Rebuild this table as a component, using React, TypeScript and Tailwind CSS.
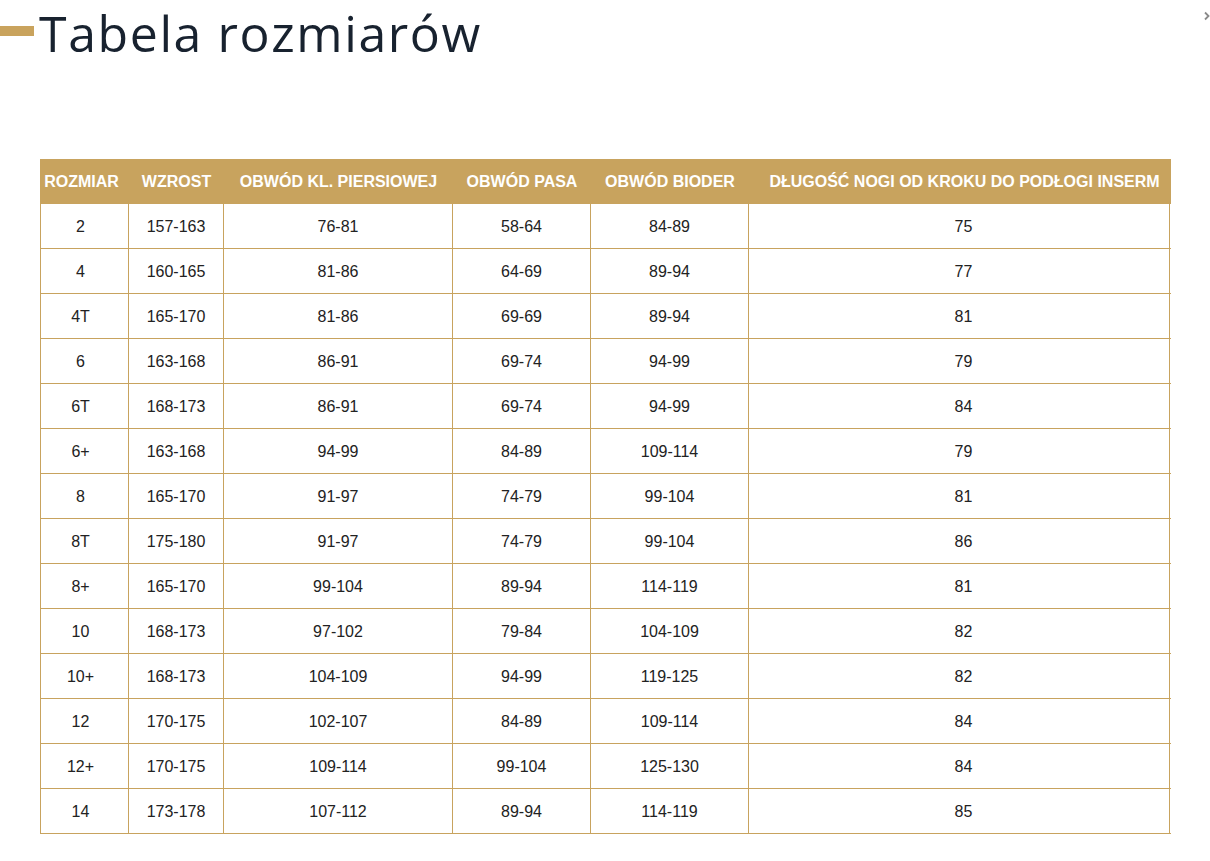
const rows: string[][] = [
  ["2", "157-163", "76-81", "58-64", "84-89", "75"],
  ["4", "160-165", "81-86", "64-69", "89-94", "77"],
  ["4T", "165-170", "81-86", "69-69", "89-94", "81"],
  ["6", "163-168", "86-91", "69-74", "94-99", "79"],
  ["6T", "168-173", "86-91", "69-74", "94-99", "84"],
  ["6+", "163-168", "94-99", "84-89", "109-114", "79"],
  ["8", "165-170", "91-97", "74-79", "99-104", "81"],
  ["8T", "175-180", "91-97", "74-79", "99-104", "86"],
  ["8+", "165-170", "99-104", "89-94", "114-119", "81"],
  ["10", "168-173", "97-102", "79-84", "104-109", "82"],
  ["10+", "168-173", "104-109", "94-99", "119-125", "82"],
  ["12", "170-175", "102-107", "84-89", "109-114", "84"],
  ["12+", "170-175", "109-114", "99-104", "125-130", "84"],
  ["14", "173-178", "107-112", "89-94", "114-119", "85"],
];

const headers = [
  "ROZMIAR",
  "WZROST",
  "OBWÓD KL. PIERSIOWEJ",
  "OBWÓD PASA",
  "OBWÓD BIODER",
  "DŁUGOŚĆ NOGI OD KROKU DO PODŁOGI INSERM",
];

// column widths incl. right border
const cols = ["w-[89px]", "w-[95px]", "w-[229px]", "w-[138px]", "w-[158px]", "w-[421px]"];

export default function App() {
  return (
    <div className="relative w-[1210px] h-[861px] bg-white overflow-hidden" style={{ fontFamily: "'Liberation Sans', Arial, sans-serif" }}>
      {/* title */}
      <div className="flex items-center h-[66px]">
        <div className="w-[34px] h-[10px] bg-[#c9a35d] mt-[-4px]" />
        <h1
          className="ml-[5px] text-[50px] leading-[1.2] text-[#18222f] tracking-[1.6px]"
          style={{ fontFamily: "'Open Sans', sans-serif", fontWeight: 400 }}
        >
          Tabela rozmiarów
        </h1>
      </div>
      <svg className="absolute left-[1203px] top-[11px]" width="8" height="10" viewBox="0 0 8 10" fill="none">
        <path d="M2 1.5 L5.5 5 L2 8.5" stroke="#8a8a8a" strokeWidth="1.8" />
      </svg>

      {/* table */}
      <div className="ml-[40px] mt-[93px] w-[1131px]">
        <div className="flex h-[45px] bg-[#c8a35e] text-white text-[16px] font-bold items-center">
          {headers.map((h, i) => (
            <div
              key={h}
              className={`${cols[i]} shrink-0 whitespace-nowrap overflow-hidden flex justify-center ${i === 0 ? "pr-[8px] pl-[2px]" : ""} ${i === 5 ? "pl-[10px]" : ""}`}
            >
              {h}
            </div>
          ))}
        </div>
        <div className="border-l border-[#c8a35e]">
          {rows.map((r, ri) => (
            <div key={ri} className="flex h-[45px] border-b border-[#c8a35e] text-[16px] text-[#222]">
              {r.map((c, ci) => (
                <div
                  key={ci}
                  className={`${ci === 0 ? "w-[88px] pr-[8px]" : cols[ci]} ${ci === 5 ? "pl-[9px]" : ""} shrink-0 border-r border-[#c8a35e] flex items-center justify-center pt-[1px]`}
                >
                  {c}
                </div>
              ))}
            </div>
          ))}
        </div>
      </div>
    </div>
  );
}
